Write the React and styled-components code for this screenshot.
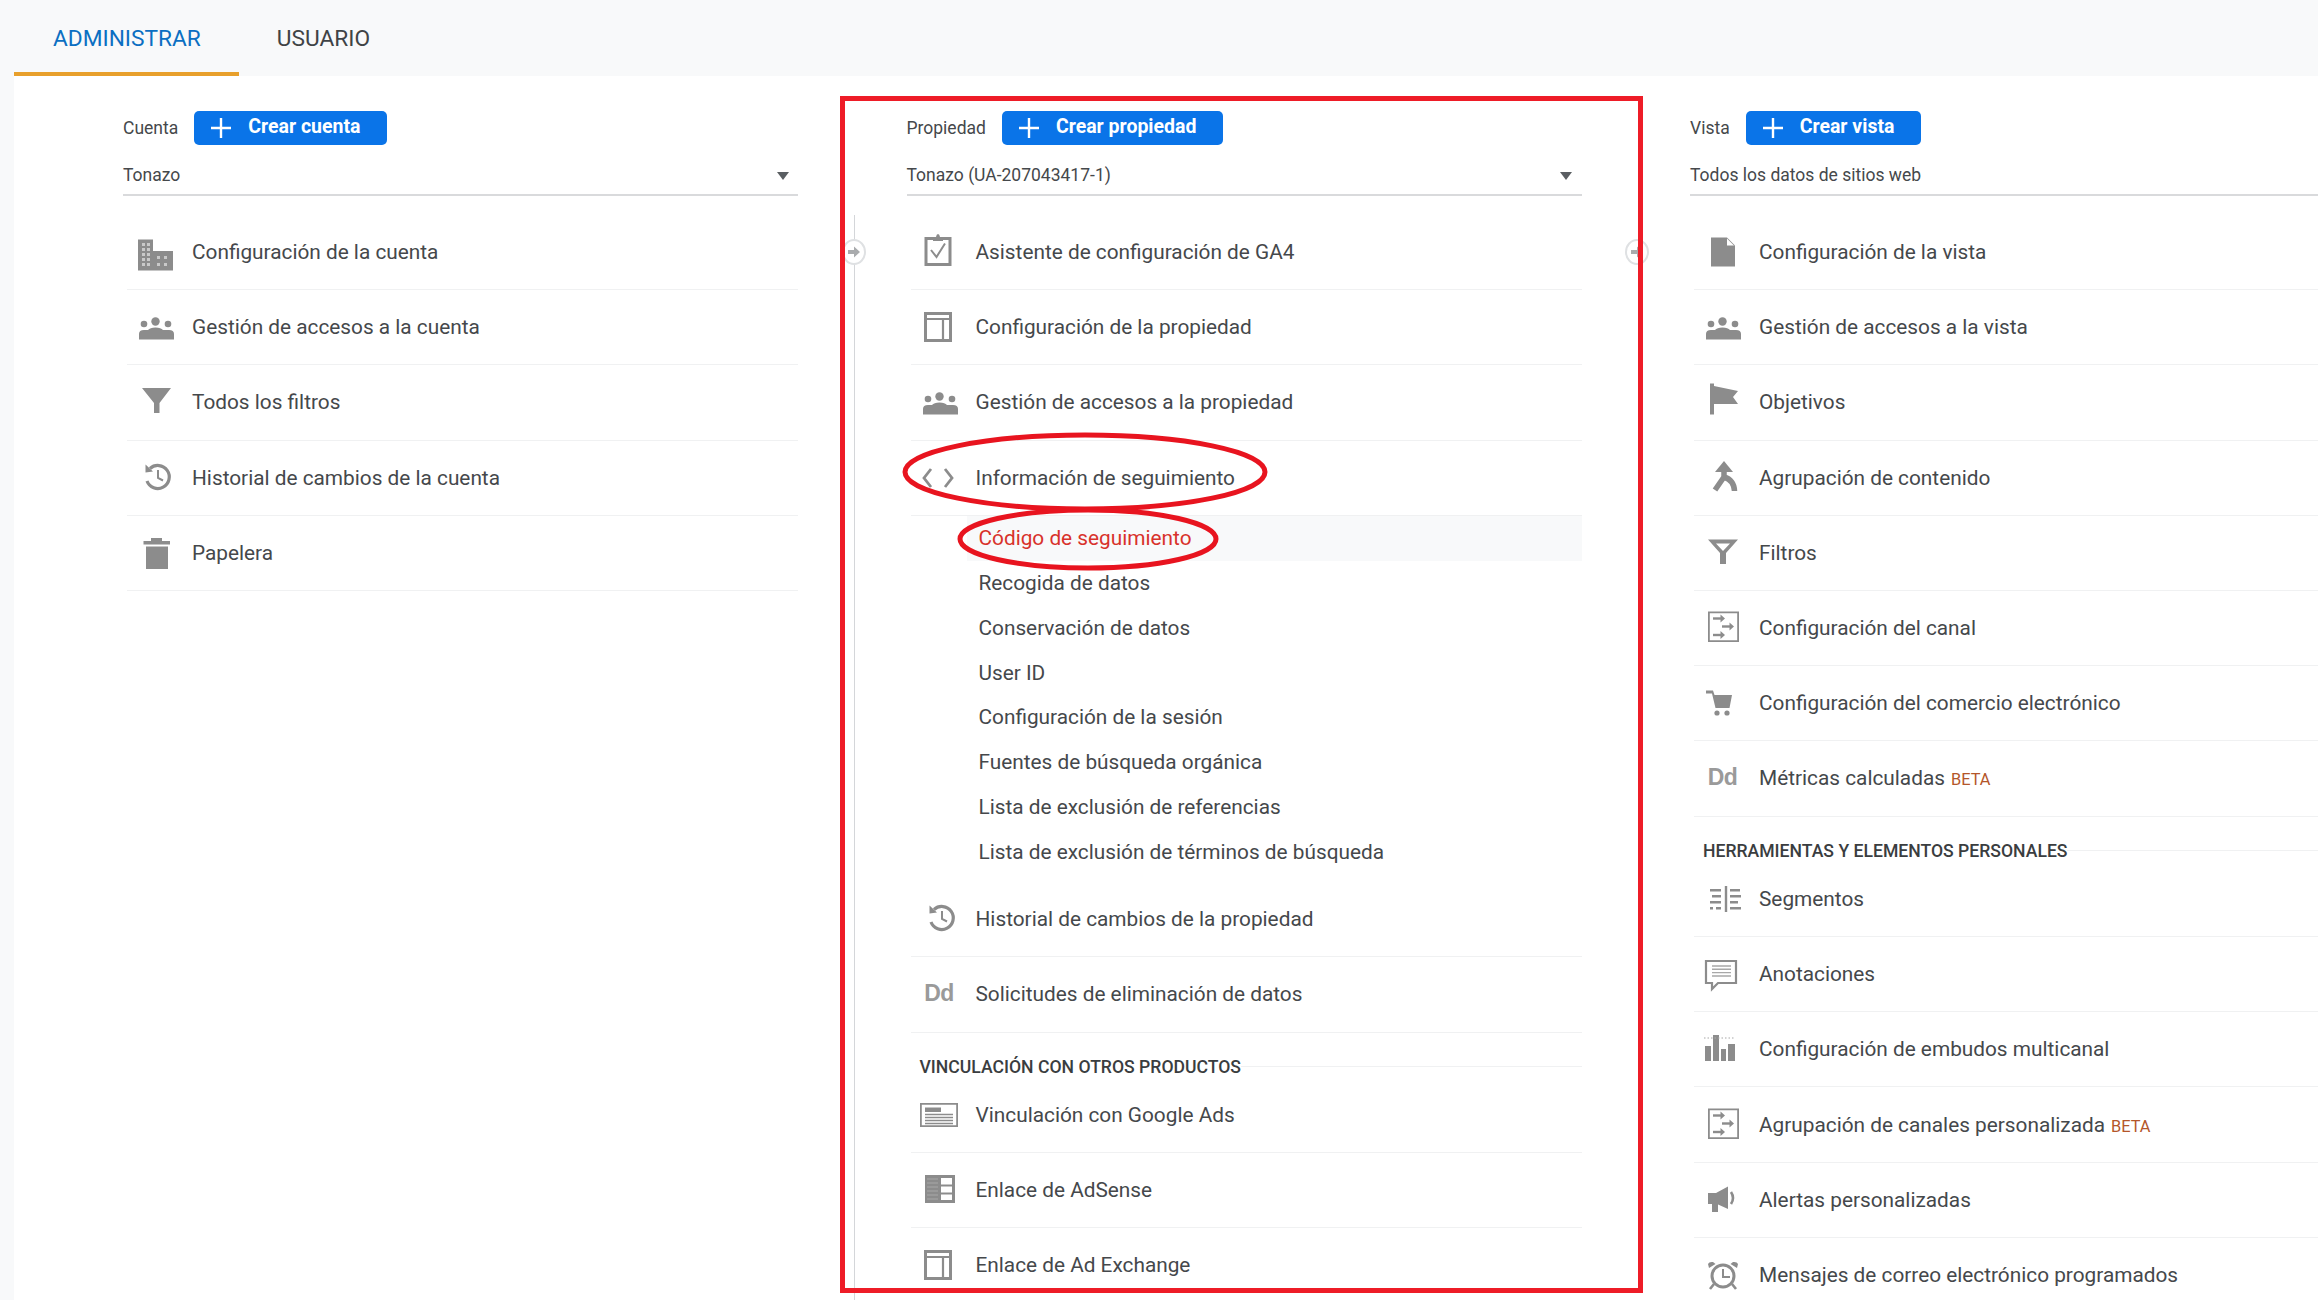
import React from "react";
import styled, { createGlobalStyle } from "styled-components";

const Global = createGlobalStyle`
  html, body { margin: 0; padding: 0; background: #f8f9fa; }
  * { box-sizing: border-box; }
  body { font-family: Roboto, "Liberation Sans", sans-serif; }
`;

const Page = styled.div`
  position: relative;
  width: 2318px;
  height: 1300px;
  overflow: hidden;
  background: #f8f9fa;
  color: #45484b;
`;
const TabBar = styled.div`
  display: flex;
  height: 76px;
  padding-left: 14px;
`;
const Tab = styled.div`
  display: flex;
  align-items: center;
  height: 76px;
  padding: 5px 38px 0 ${(p) => (p.$active ? "39px" : "38px")};
  font-size: 22.7px;
  color: ${(p) => (p.$active ? "#0b6fc2" : "#3f4346")};
  border-bottom: 4px solid ${(p) => (p.$active ? "#e8a02c" : "transparent")};
`;
const Content = styled.div`
  display: grid;
  grid-template-columns: 675px 675px 1fr;
  column-gap: 108.5px;
  height: 1224px;
  margin-left: 14px;
  padding: 35px 0 0 109px;
  background: #fff;
`;
const Column = styled.section`
  position: relative;
  min-width: 0;
`;
const Rail = styled.div`
  position: absolute;
  left: -53px;
  top: 104px;
  bottom: 0;
  width: 1px;
  background: #d4d6d9;
`;
const Toggle = styled.div`
  position: absolute;
  left: -65px;
  top: 128px;
  width: 24px;
  height: 26px;
  display: flex;
  align-items: center;
  justify-content: center;
  border-radius: 50%;
  border: 2px solid #dfe1e3;
  background: #fff;
`;
const HeaderRow = styled.div`
  display: flex;
  align-items: center;
  gap: 16px;
  height: 34px;
`;
const HeaderLabel = styled.span`
  font-size: 17.5px;
  color: #45484b;
`;
const CreateButton = styled.div`
  display: flex;
  align-items: center;
  height: 34px;
  padding: 0 27px 3px 17px;
  background: #0a74e8;
  border-radius: 5px;
  color: #fff;
  font-size: 19.5px;
  font-weight: 700;
  svg { margin: 3px 17px 0 0; }
`;
const Picker = styled.div`
  display: flex;
  align-items: center;
  justify-content: space-between;
  height: 51px;
  padding: 11px 9.5px 0 0;
  font-size: 17.5px;
  color: #45484b;
  border-bottom: 2px solid #d9dadc;
  margin-bottom: 19px;
`;
const Caret = styled.span`
  width: 0;
  height: 0;
  margin-top: 2px;
  border-left: 6.5px solid transparent;
  border-right: 6.5px solid transparent;
  border-top: 8px solid #5a5e62;
`;
const Row = styled.div`
  display: flex;
  align-items: center;
  height: 75.2px;
  margin-left: 4px;
  padding-left: 6px;
  border-bottom: 1px solid #f0f1f2;
  font-size: 20.8px;
  color: #45484b;
  white-space: nowrap;
`;
const IconSlot = styled.span`
  flex: none;
  display: flex;
  align-items: center;
  justify-content: center;
  width: 44px;
  height: 44px;
  margin-right: 15px;
`;
const Glyph = styled.svg`
  display: block;
  width: 44px;
  height: 44px;
  fill: #8c8c8c;
`;
const DdMark = styled.span`
  font-family: "Liberation Sans", Arial, sans-serif;
  font-weight: 700;
  font-size: 23px;
  color: #9a9a9a;
  letter-spacing: -0.5px;
  margin: -2px 0 0 1px;
`;
const Beta = styled.span`
  margin-left: 6px;
  font-size: 16.4px;
  color: #b4562a;
`;
const SubList = styled.div`
  padding-bottom: 8px;
`;
const SubItem = styled.div`
  display: flex;
  align-items: center;
  height: 44.8px;
  margin-left: 60px;
  padding-left: 12px;
  font-size: 20.8px;
  white-space: nowrap;
  color: ${(p) => (p.$active ? "#d8322b" : "#45484b")};
  background: ${(p) => (p.$active ? "#f8f9fa" : "transparent")};
`;
const SectionTitle = styled.div`
  display: flex;
  align-items: center;
  height: 45.4px;
  padding: 23px 0 0 13px;
  font-size: 17.6px;
  font-weight: 500;
  color: #3a3d40;
  white-space: nowrap;
  &::after {
    content: "";
    flex: 1;
    height: 1px;
    background: #f0f1f2;
  }
`;
const Frame = styled.div`
  position: absolute;
  left: 840px;
  top: 96px;
  width: 803px;
  height: 1197px;
  border: 5px solid #ee1c27;
  pointer-events: none;
`;
const Ink = styled.svg`
  position: absolute;
  left: 0;
  top: 0;
  width: 2318px;
  height: 1300px;
  pointer-events: none;
`;

const Light = styled.rect`
  fill: #c9c9c9;
`;
const Stroke = styled.path`
  fill: none;
  stroke: #8c8c8c;
  stroke-width: ${(p) => p.$w || 2};
`;
const White = styled.path`
  fill: #fff;
`;
const Thin = styled.path`
  fill: none;
  stroke: #a8a8a8;
  stroke-width: ${(p) => p.$w || 1.4};
`;

const Arrow = ({ x, y, len = 10 }) => (
  <>
    <Stroke $w={2.4} d={`M${x} ${y}H${x + len - 4}`} />
    <path d={`M${x + len - 4.5} ${y - 4}L${x + len} ${y}L${x + len - 4.5} ${y + 4}Z`} />
  </>
);

const icons = {
  building: (
    <>
      <path d="M5 9.5H20V21H40V40.5H5Z" />
      {[13, 18, 23, 28, 33].map((y) =>
        [9, 14].map((x) => <Light key={`${x}-${y}`} x={x} y={y} width="3" height="3" />)
      )}
      {[26, 33].map((y) =>
        [24, 31].map((x) => <Light key={`b${x}-${y}`} x={x} y={y} width="3" height="3" />)
      )}
    </>
  ),
  people: (
    <>
      <circle cx="22.5" cy="16.5" r="4.2" />
      <circle cx="11" cy="19" r="3.3" />
      <circle cx="35" cy="19" r="3.3" />
      <path d="M6 34.5V29Q6 25 11 25H15Q17 22.5 22.5 22.5Q28 22.5 30 25H36Q41 25 41 29V34.5Z" />
    </>
  ),
  filter: <path d="M9 8H38L26.5 23V33H21V23Z" />,
  history: (
    <>
      <Stroke $w={3.2} d="M17 12.5A11.5 11.5 0 1 1 14 25" />
      <path d="M12.5 8.5L20 15.5L12.5 16.5Z" />
      <Stroke $w={2} d="M25 14V22L30 24.5" />
    </>
  ),
  trash: (
    <>
      <path d="M18 7H29V10H37V13.5H10.5V10H18Z" />
      <path d="M13 15.5H35V38H13Z" />
    </>
  ),
  clipboard: (
    <>
      <Stroke $w={3} d="M16 8.5H9V34.5H33V8.5H26" />
      <path d="M16 7H19Q19.5 4 21 4Q22.5 4 23 7H26V11H16Z" />
      <Stroke $w={2} d="M14 20L19.5 27L28 13.5" />
    </>
  ),
  layout: (
    <>
      <Stroke $w={3} d="M8.5 8.5H33.5V35.5H8.5Z" />
      <Stroke $w={2.2} d="M8 14H34M26 14V35" />
    </>
  ),
  code: (
    <>
      <Stroke $w={2.8} d="M14 13L7 22L14 31" />
      <Stroke $w={2.8} d="M28 13L35 22L28 31" />
    </>
  ),
  ad: (
    <>
      <Stroke $w={1.8} d="M3.9 10.9H40.1V33.1H3.9Z" />
      <path d="M8 14.5H24V19H8Z" />
      <Stroke $w={1.3} d="M8 21.5H36M8 24.5H36M8 27.5H36M8 30.5H36" />
    </>
  ),
  adsense: (
    <>
      <path d="M8 7H38V35H8Z" />
      <White d="M24 10H35V16.5H24ZM24 18.5H35V24.5H24ZM24 26.5H35V32H24Z" />
      <Thin $w={1.2} d="M10 11H21M10 15H21M10 19H21M10 23H21M10 27H21M10 31H21" />
    </>
  ),
  doc: (
    <>
      <path d="M11 7.5H27L35 15.5V36.5H11Z" />
      <White d="M27 8.5V15.5H34Z" />
    </>
  ),
  flag: (
    <>
      <path d="M10 3.5H14V34.5H10Z" />
      <path d="M14 6L38 11L33 17L38 24L14 24Z" />
    </>
  ),
  merge: (
    <>
      <path d="M24 5L33 16H15Z" />
      <Stroke $w={5.5} d="M24 13V21L15 34M24 21Q34 24 34.5 35" />
    </>
  ),
  filter2: <path fillRule="evenodd" d="M8 8.5H38L26 22V33H20V22ZM16 12.5L23 20L30 12.5Z" />,
  channel: (
    <>
      <Stroke $w={1.8} d="M8.9 6.4H38.1V35.1H8.9Z" />
      <Arrow x={13} y={12.5} len={12} />
      <Arrow x={22} y={20.5} len={12} />
      <Arrow x={13} y={29} len={12} />
    </>
  ),
  cart: (
    <>
      <path d="M6 9.5H13L14.5 14H32L29.5 27H15.5L12 12.5H6Z" />
      <circle cx="17" cy="32" r="2.6" />
      <circle cx="27" cy="32" r="2.6" />
    </>
  ),
  segments: (
    <>
      <path d="M24.8 9H27.2V35H24.8Z" />
      <path d="M10 12H21V14.6H10ZM12 18H21V20.6H12ZM10 24H21V26.6H10ZM10 30H13V32.6H10ZM16 30H21V32.6H16Z" />
      <path d="M30 12H40V14.6H30ZM30 18H41V20.6H30ZM30 24H38V26.6H30ZM30 30H41V32.6H30Z" />
    </>
  ),
  speech: (
    <>
      <Stroke $w={2.2} d="M6 9H36V31H18L12 37V31H6Z" />
      <Thin d="M12 14H31M12 17.3H31M12 20.6H31M12 24H31" />
    </>
  ),
  bars: (
    <>
      <path d="M5 19H11V34H5ZM13 8H19V34H13ZM21 22H26V34H21ZM28 17H35V34H28Z" />
      <Thin $w={1.2} d="M4 11H35" strokeDasharray="1.5 2" />
    </>
  ),
  megaphone: (
    <>
      <path d="M8 15H16L28 8.5V31L17 26H8Z" />
      <path d="M12 26H18V34H12Z" />
      <Stroke $w={2.6} d="M31 14Q35 20 31 26" />
    </>
  ),
  alarm: (
    <>
      <Stroke $w={3} d="M34 23A11 11 0 1 1 12 23A11 11 0 1 1 34 23Z" />
      <Stroke $w={2} d="M23 16V24H30" />
      <path d="M9 15L8 11Q9 8.5 13 9L15.5 11ZM37 15L38 11Q37 8.5 33 9L30.5 11Z" />
      <Stroke $w={2.6} d="M14 31L10 36M32 31L36 36" />
    </>
  ),
};

const Icon = ({ name }) => (
  <IconSlot>
    {name === "dd" ? (
      <DdMark>Dd</DdMark>
    ) : (
      <Glyph viewBox="0 0 44 44">{icons[name]}</Glyph>
    )}
  </IconSlot>
);

const Item = ({ icon, label, beta }) => (
  <Row>
    <Icon name={icon} />
    <span>
      {label}
      {beta && <Beta>BETA</Beta>}
    </span>
  </Row>
);

const Plus = () => (
  <svg width="20" height="20" viewBox="0 0 20 20">
    <path d="M10 0V20M0 10H20" stroke="#fff" strokeWidth="2.4" />
  </svg>
);

const Head = ({ label, action }) => (
  <HeaderRow>
    <HeaderLabel>{label}</HeaderLabel>
    <CreateButton>
      <Plus />
      {action}
    </CreateButton>
  </HeaderRow>
);

const ToggleArrow = () => (
  <svg width="14" height="12" viewBox="0 0 14 12">
    <path d="M1 4H7V0.5L13 6L7 11.5V8H1Z" fill="#a9abad" />
  </svg>
);

const cuenta = [
  ["building", "Configuración de la cuenta"],
  ["people", "Gestión de accesos a la cuenta"],
  ["filter", "Todos los filtros"],
  ["history", "Historial de cambios de la cuenta"],
  ["trash", "Papelera"],
];
const propiedadTop = [
  ["clipboard", "Asistente de configuración de GA4"],
  ["layout", "Configuración de la propiedad"],
  ["people", "Gestión de accesos a la propiedad"],
  ["code", "Información de seguimiento"],
];
const seguimiento = [
  "Código de seguimiento",
  "Recogida de datos",
  "Conservación de datos",
  "User ID",
  "Configuración de la sesión",
  "Fuentes de búsqueda orgánica",
  "Lista de exclusión de referencias",
  "Lista de exclusión de términos de búsqueda",
];
const propiedadMid = [
  ["history", "Historial de cambios de la propiedad"],
  ["dd", "Solicitudes de eliminación de datos"],
];
const vinculos = [
  ["ad", "Vinculación con Google Ads"],
  ["adsense", "Enlace de AdSense"],
  ["layout", "Enlace de Ad Exchange"],
];
const vista = [
  ["doc", "Configuración de la vista"],
  ["people", "Gestión de accesos a la vista"],
  ["flag", "Objetivos"],
  ["merge", "Agrupación de contenido"],
  ["filter2", "Filtros"],
  ["channel", "Configuración del canal"],
  ["cart", "Configuración del comercio electrónico"],
  ["dd", "Métricas calculadas", true],
];
const herramientas = [
  ["segments", "Segmentos"],
  ["speech", "Anotaciones"],
  ["bars", "Configuración de embudos multicanal"],
  ["channel", "Agrupación de canales personalizada", true],
  ["megaphone", "Alertas personalizadas"],
  ["alarm", "Mensajes de correo electrónico programados"],
];

const renderItems = (list) =>
  list.map(([icon, label, beta]) => <Item key={label} icon={icon} label={label} beta={beta} />);

export default function App() {
  return (
    <Page>
      <Global />
      <TabBar>
        <Tab $active>ADMINISTRAR</Tab>
        <Tab>USUARIO</Tab>
      </TabBar>
      <Content>
        <Column>
          <Head label="Cuenta" action="Crear cuenta" />
          <Picker>
            Tonazo
            <Caret />
          </Picker>
          {renderItems(cuenta)}
        </Column>
        <Column>
          <Rail />
          <Toggle>
            <ToggleArrow />
          </Toggle>
          <Head label="Propiedad" action="Crear propiedad" />
          <Picker>
            Tonazo (UA-207043417-1)
            <Caret />
          </Picker>
          {renderItems(propiedadTop)}
          <SubList>
            {seguimiento.map((s, i) => (
              <SubItem key={s} $active={i === 0}>
                {s}
              </SubItem>
            ))}
          </SubList>
          {renderItems(propiedadMid)}
          <SectionTitle>VINCULACIÓN CON OTROS PRODUCTOS</SectionTitle>
          {renderItems(vinculos)}
        </Column>
        <Column>
          <Toggle>
            <ToggleArrow />
          </Toggle>
          <Head label="Vista" action="Crear vista" />
          <Picker>Todos los datos de sitios web</Picker>
          {renderItems(vista)}
          <SectionTitle>HERRAMIENTAS Y ELEMENTOS PERSONALES</SectionTitle>
          {renderItems(herramientas)}
        </Column>
      </Content>
      <Frame />
      <Ink viewBox="0 0 2318 1300">
        <ellipse cx="1085" cy="472" rx="180" ry="37" fill="none" stroke="#e8141f" strokeWidth="5" />
        <ellipse cx="1088" cy="539" rx="128" ry="29" fill="none" stroke="#e8141f" strokeWidth="5" />
      </Ink>
    </Page>
  );
}
